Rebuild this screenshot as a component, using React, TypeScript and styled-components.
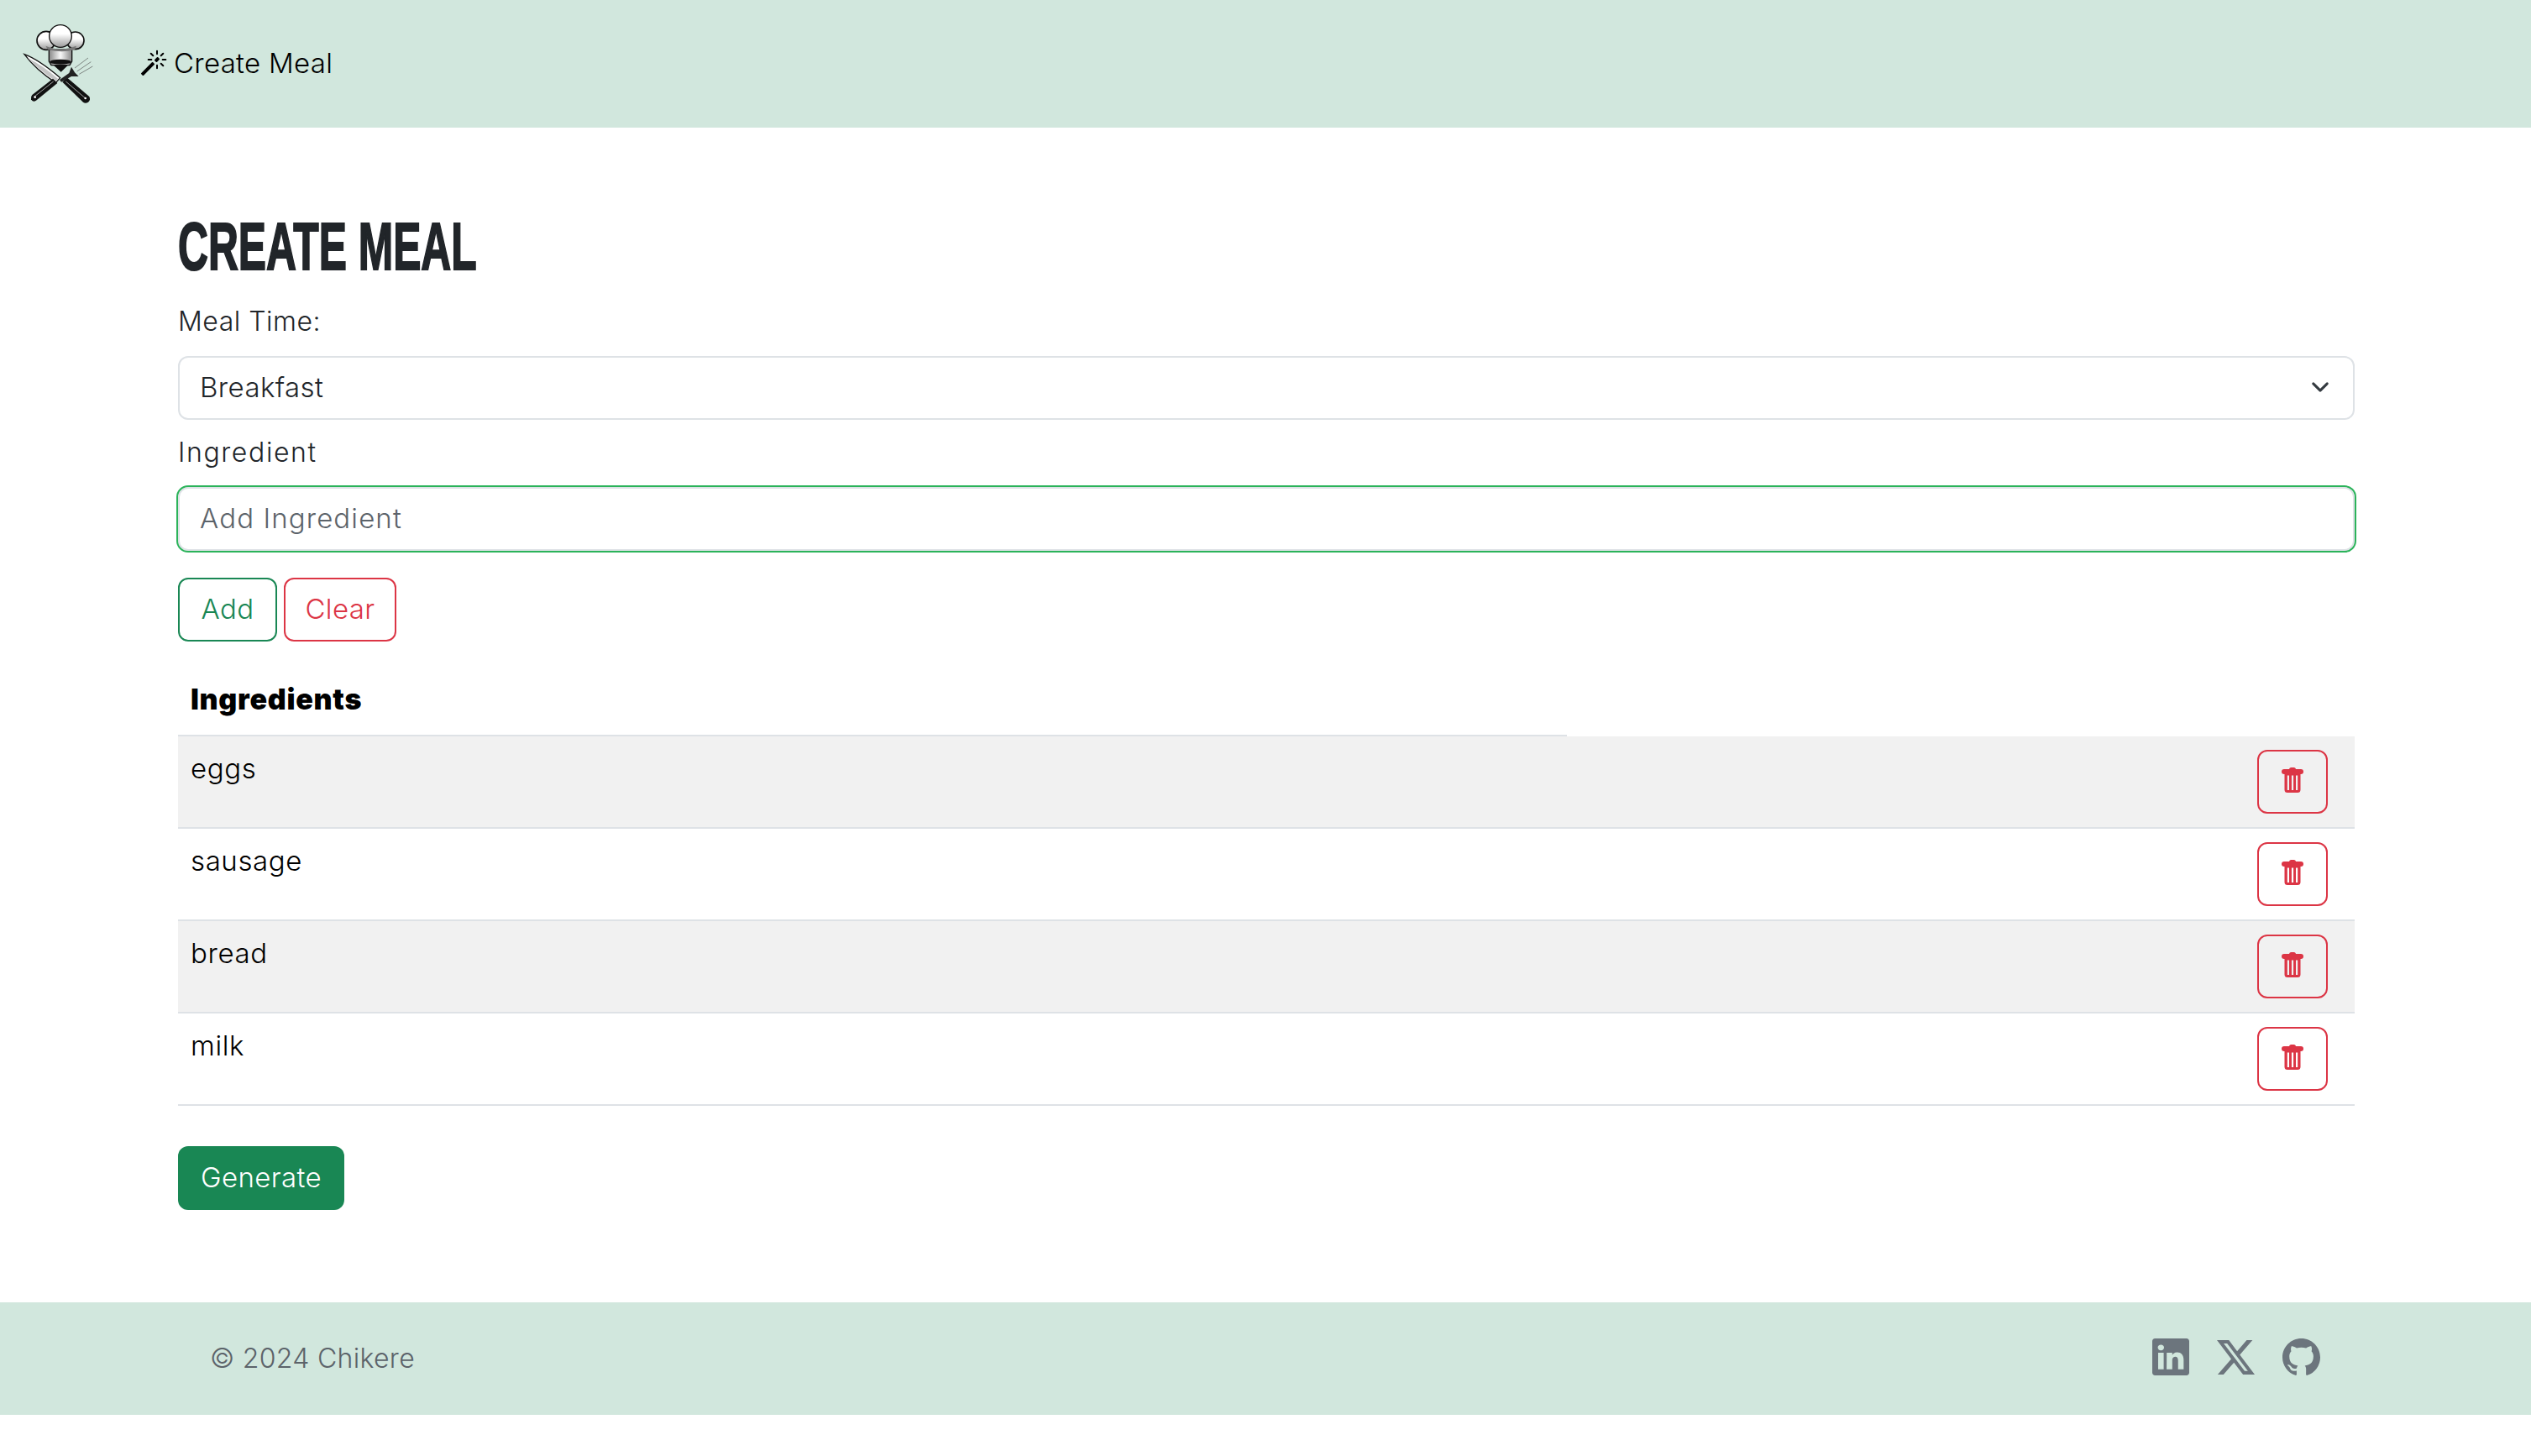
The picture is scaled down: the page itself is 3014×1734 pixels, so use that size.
import React from "react";
import styled, { createGlobalStyle } from "styled-components";
import { BsMagic, BsLinkedin, BsTwitterX, BsGithub, BsChevronDown } from "react-icons/bs";

const Global = createGlobalStyle`
  html, body { margin: 0; background: #fff; }
  body { font-family: Inter, "Noto Sans", sans-serif; font-size: 33px; color: #212529; }
  * { box-sizing: border-box; }
`;
const Page = styled.div`display: flex; flex-direction: column; min-height: 1734px;`;
const Header = styled.header`
  height: 152px; background: #d1e7dd; display: flex; align-items: center; padding-left: 27px; gap: 52px;
`;
const NavLink = styled.a`
  display: flex; align-items: center; gap: 8px; color: #000; font-size: 33px; line-height: 40px; font-weight: 300; letter-spacing: 0.3px; padding-bottom: 2px;
`;
const Main = styled.main`padding: 104px 210px 0 212px; display: flex; flex-direction: column;`;
const Title = styled.h1`
  margin: 0 0 28px; height: 76px; line-height: 76px; font-family: "Liberation Sans", sans-serif; font-weight: 700;
  font-size: 80px; transform: scaleX(0.622); transform-origin: left center; white-space: nowrap; color: #212529;
  -webkit-text-stroke: 2px #212529;
`;
const Label = styled.label<{ $ls: number }>`
  display: block; height: 48px; line-height: 46px; font-size: 32px; font-weight: 300; letter-spacing: ${(p) => p.$ls}px; margin-bottom: 16px;
`;
const SelectBox = styled.div`
  height: 76px; border: 2px solid #dee2e6; border-radius: 12px; display: flex; align-items: center; justify-content: space-between;
  padding: 0 28px 2px 24px; margin-bottom: 16px; font-size: 33px; font-weight: 300; letter-spacing: 0.4px;
`;
const Input = styled.input`
  display: block; width: 100%; height: 76px; border: 2px solid #dee2e6; border-radius: 12px; outline: 2px solid #2bb35a; outline-offset: 0;
  padding: 0 24px 3px; font: 300 33px Inter, sans-serif; letter-spacing: 1.1px; color: #212529; background: #fff; margin-bottom: 32px;
  &::placeholder { color: #5c636a; opacity: 1; }
`;
const ButtonRow = styled.div`display: flex; gap: 8px; margin-bottom: 31px;`;
const OutlineButton = styled.button<{ $c: string; $w: number }>`
  height: 76px; width: ${(p) => p.$w}px; padding: 0 0 2px; background: transparent; border: 2px solid ${(p) => p.$c}; color: ${(p) => p.$c};
  border-radius: 12px; font: 300 33px Inter, sans-serif; letter-spacing: 0.4px; display: flex; align-items: center; justify-content: center;
`;
const Table = styled.div`display: grid; grid-template-columns: 1654px 1fr;`;
const HeadCell = styled.div`
  height: 82px; border-bottom: 2px solid #dee2e6; padding: 14px 15px; font-weight: 900; color: #000; font-size: 34px; line-height: 48px; letter-spacing: 0.7px;
`;
const Row = styled.div<{ $odd: boolean }>`
  grid-column: 1 / 3; height: 110px; display: flex; justify-content: space-between; align-items: flex-start;
  padding: 14px 32px 0 15px; border-bottom: 2px solid #dee2e6; background: ${(p) => (p.$odd ? "#f1f1f1" : "#fff")};
  color: #000; font-weight: 300; letter-spacing: 0.6px; line-height: 48px; font-size: 33px;
`;
const RowButton = styled(OutlineButton)`margin-top: 2px; padding-bottom: 5px;`;
const Generate = styled.button`
  margin-top: 48px; width: 198px; height: 76px; padding: 0 0 3px; background: #198754; color: #fff; border: none; border-radius: 12px;
  font: 300 33px Inter, sans-serif; letter-spacing: 0.4px;
`;
const Footer = styled.footer`
  margin-top: 110px; height: 134px; background: #d1e7dd; display: flex; align-items: center; justify-content: space-between;
  padding: 0 251px 2px 250px; color: #5c636a; font-size: 32px; font-weight: 300; letter-spacing: 0.3px;
`;
const Social = styled.div`display: flex; gap: 33px; color: #6c757d; padding: 0 0 2px 2px;`;

const Trash = () => (
  <svg width="26" height="30" viewBox="0 0 26 30" fill="currentColor">
    <rect x="0" y="2" width="26" height="6" rx="3" />
    <rect x="9" y="0" width="8" height="5" rx="2.5" />
    <path fillRule="evenodd" d="M3.5 7h19v19.5a3.5 3.5 0 0 1-3.5 3.5h-12a3.5 3.5 0 0 1-3.5-3.5zM6.8 9.5v17.5h2.2v-17.5zM11.9 9.5v17.5h2.2v-17.5zM17 9.5v17.5h2.2v-17.5z" />
  </svg>
);

const Logo = () => (
  <svg width="88" height="96" viewBox="78 85 264 288">
    <defs>
      <linearGradient id="puff" x1="0" y1="0" x2="0" y2="1"><stop offset="0.4" stopColor="#fff" /><stop offset="1" stopColor="#999" /></linearGradient>
      <linearGradient id="band" x1="0" y1="0" x2="1" y2="0"><stop offset="0" stopColor="#888" /><stop offset="0.5" stopColor="#f8f8f8" /><stop offset="1" stopColor="#888" /></linearGradient>
    </defs>
    <path d="M172 178v42l8 14h66l8-14v-42z" fill="url(#band)" stroke="#111" strokeWidth="4" />
    <circle cx="162" cy="146" r="33" fill="url(#puff)" stroke="#111" strokeWidth="5" />
    <circle cx="266" cy="146" r="31" fill="url(#puff)" stroke="#111" strokeWidth="5" />
    <circle cx="213" cy="130" r="40" fill="url(#puff)" stroke="#111" strokeWidth="4" />
    <path d="M160 165q50 22 110 0l-6 14q-45 12-96 0z" fill="#777" />
    <ellipse cx="213" cy="222" rx="38" ry="9" fill="#111" />
    <path d="M186 232h56l-27 26z" fill="#111" />
    <path d="M84 195q50 18 128 84l-16 18q-72-48-112-102z" fill="#fff" stroke="#111" strokeWidth="4" />
    <path d="M96 208q55 28 108 74l-8 10q-55-38-100-84z" fill="#c4c4c4" />
    <path d="M220 294l16-16 80 68q6 12-4 20q-10 6-18 0z" fill="#111" />
    <path d="M312 208l-48 36M322 222l-50 34M328 238l-48 28" stroke="#555" strokeWidth="2" fill="none" />
    <path d="M252 240l-8 22-34 24 6 8 36-20 26 0 -14-14z" fill="#222" />
    <path d="M186 282l16 16-76 62q-12 8-18-4-2-10 4-16z" fill="#111" />
    <path d="M188 292l-68 54M232 292l70 60" stroke="#eee" strokeWidth="2" fill="none" />
    <circle cx="122" cy="348" r="4" fill="#fff" />
    <circle cx="302" cy="352" r="4" fill="#fff" />
  </svg>
);

export default function App() {
  return (
    <Page>
      <Global />
      <Header>
        <Logo />
        <NavLink><BsMagic size={32} color="#000" />Create Meal</NavLink>
      </Header>
      <Main>
        <Title>CREATE MEAL</Title>
        <Label $ls={0.5}>Meal Time:</Label>
        <SelectBox>Breakfast<BsChevronDown size={22} stroke="currentColor" strokeWidth={1.2} color="#343a40" /></SelectBox>
        <Label $ls={1.6}>Ingredient</Label>
        <Input placeholder="Add Ingredient" />
        <ButtonRow>
          <OutlineButton $c="#198754" $w={118}>Add</OutlineButton>
          <OutlineButton $c="#dc3545" $w={134}>Clear</OutlineButton>
        </ButtonRow>
        <Table>
          <HeadCell>Ingredients</HeadCell>
          <div />
          {["eggs", "sausage", "bread", "milk"].map((t, i) => (
            <Row key={t} $odd={i % 2 === 0}>
              {t}
              <RowButton $c="#dc3545" $w={84}><Trash /></RowButton>
            </Row>
          ))}
        </Table>
        <Generate>Generate</Generate>
      </Main>
      <Footer>
        <span>© 2024 Chikere</span>
        <Social><BsLinkedin size={44} /><BsTwitterX size={45} /><BsGithub size={45} /></Social>
      </Footer>
    </Page>
  );
}
